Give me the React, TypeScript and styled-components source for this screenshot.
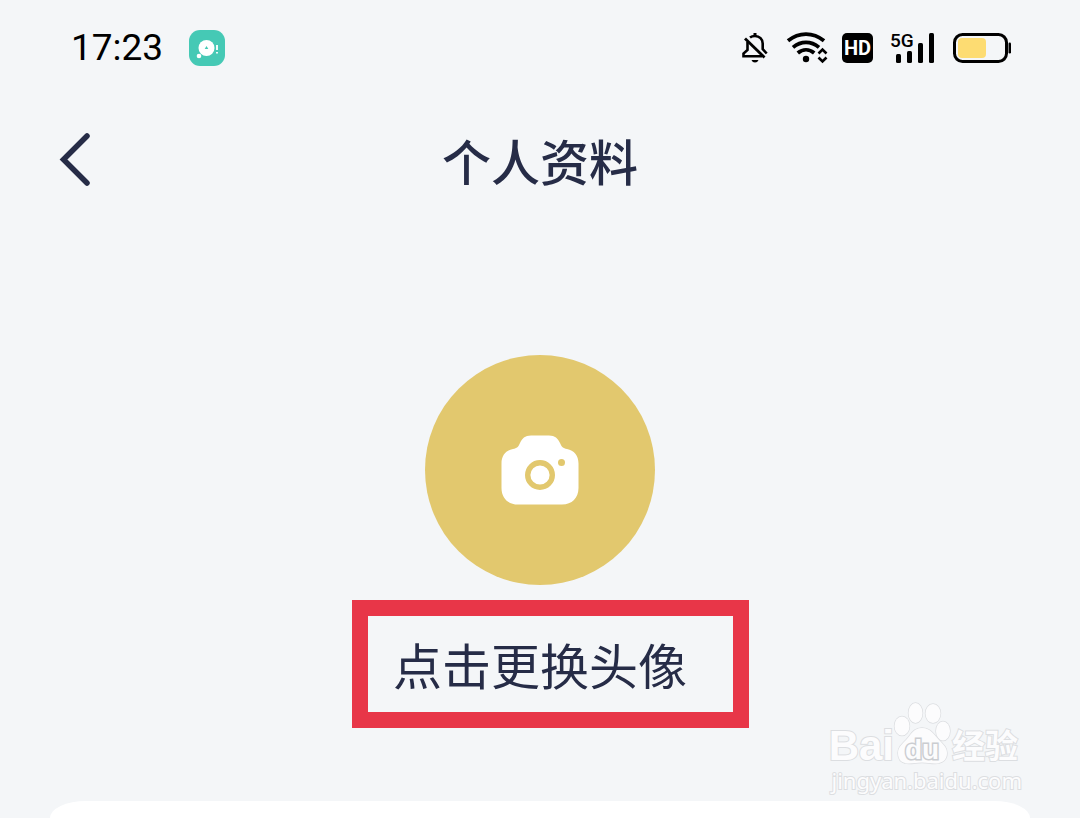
import React from 'react';
import styled, { createGlobalStyle } from 'styled-components';

const ink = '#262c47';
const surface = '#f4f6f8';
const gold = '#e2c86e';
const sans = '"Noto Sans", "Noto Sans CJK SC", sans-serif';

const GlobalStyle = createGlobalStyle`
  * { box-sizing: border-box; }
  body { margin: 0; background: ${surface}; font-family: ${sans}; }
  button { font: inherit; color: inherit; background: none; border: 0; padding: 0; cursor: pointer; }
  svg { display: block; flex: none; overflow: visible; }
`;

const Page = styled.div`
  position: relative;
  display: flex;
  flex-direction: column;
  min-height: 100vh;
  color: ${ink};
`;

const StatusBar = styled.div`
  display: flex;
  align-items: center;
  justify-content: space-between;
  height: 96px;
  padding: 0 68px 0 71px;
  color: #000;
`;

const StatusGroup = styled.div<{ $gap: number }>`
  display: flex;
  align-items: center;
  gap: ${(p) => p.$gap}px;
`;

const Clock = styled.time`
  font-family: Roboto, sans-serif;
  font-size: 37px;
  line-height: 44px;
`;

const Header = styled.header`
  display: grid;
  grid-template-columns: 1fr auto 1fr;
  align-items: center;
  height: 128px;
  padding: 0 56px;
`;

const BackButton = styled.button`
  justify-self: start;
`;

const Title = styled.h1`
  margin: 0;
  font-family: "Noto Sans CJK SC", sans-serif;
  font-size: 49px;
  line-height: 72px;
  font-weight: 500;
`;

const Profile = styled.main`
  display: flex;
  flex-direction: column;
  align-items: center;
  padding: 131px 0 89px;
`;

const Avatar = styled.button`
  display: grid;
  place-items: center;
  width: 230px;
  height: 230px;
  border-radius: 50%;
  background: ${gold};
`;

const ChangeAvatar = styled.button`
  position: relative;
  margin-top: 31px;
  font-family: "Noto Sans CJK SC", sans-serif;
  font-size: 49px;
  line-height: 96px;
  font-weight: 400;
  white-space: nowrap;

  &::after {
    content: '';
    position: absolute;
    inset: -16px -62px -16px -41px;
    border: 16px solid #e83648;
  }
`;

const Card = styled.section`
  flex: 1;
  margin: 0 50px;
  border-radius: 36px 36px 0 0 / 17px 17px 0 0;
  background: #fff;
`;

const Watermark = styled.div`
  position: absolute;
  top: 700px;
  right: 58px;
  display: flex;
  flex-direction: column;
  align-items: flex-end;
  color: #fcfcfd;
  -webkit-text-stroke: 2px #dcdee1;
  paint-order: stroke fill;
  pointer-events: none;
`;

const Brand = styled.div`
  display: flex;
  align-items: flex-end;
  height: 68px;
  padding-right: 4px;
`;

const Latin = styled.span`
  font-family: "Liberation Sans", Arial, sans-serif;
  font-size: 42px;
  line-height: 44px;
  font-weight: 700;
`;

const Han = styled.span`
  font-family: "Noto Sans CJK SC", sans-serif;
  font-size: 33px;
  line-height: 48px;
  font-weight: 700;
`;

const Site = styled.span`
  font-family: "Noto Sans", sans-serif;
  font-size: 22px;
  line-height: 24px;
`;

const AppBadge = () => (
  <svg width="36" height="36" viewBox="0 0 36 36" aria-hidden="true">
    <rect width="36" height="36" rx="11" fill="#45c9b5" />
    <circle cx="17.5" cy="18" r="8" fill="#fff" />
    <circle cx="10" cy="26" r="2.3" fill="#fff" />
    <path d="M17.5 16l1.800 3h-3.600z" fill="#45c9b5" />
    <path d="M28 15v5M28 22v1.500" stroke="#fff" strokeWidth="1.800" />
  </svg>
);

const MutedBell = () => (
  <svg width="26" height="32" viewBox="0 0 26 32" fill="none" stroke="#000" strokeWidth="2.600" aria-label="静音" role="img">
    <path d="M13 1v3" strokeWidth="3" />
    <path d="M8 5.500C9.500 4.300 11.200 4 13 4c4.500 0 7.700 3.200 7.700 7.500v5.500l4 4.500" />
    <path d="M5.500 10v8L1.500 21.500v2.700H20" />
    <path d="M3 6.500L22.500 25.500" strokeWidth="2.800" />
    <path d="M9.500 28h7c-.7 1.700-1.900 2.500-3.500 2.500S10.200 29.700 9.500 28z" fill="#000" stroke="none" />
  </svg>
);

const Wifi = () => (
  <svg width="40" height="32" viewBox="0 0 40 32" fill="none" stroke="#000" strokeWidth="3.800" aria-label="Wi-Fi" role="img">
    <path d="M1 8.800C12-.2 26-.2 37 8.800" />
    <path d="M6 15.400c8-6.600 18-6.600 26 0" />
    <path d="M10.800 21c5-4.200 11.400-4.200 16.400 0" />
    <circle cx="19" cy="27" r="3.200" fill="#000" stroke="none" />
    <path d="M31.500 21.500l4-4 4 4M31.500 25.500l4 4 4-4" strokeWidth="2.600" />
  </svg>
);

const Hd = () => (
  <svg width="31" height="30" viewBox="0 0 31 30" aria-label="HD" role="img">
    <rect width="31" height="30" rx="5" />
    <text x="15.500" y="22" textAnchor="middle" fill="#fff" fontFamily="Roboto, sans-serif" fontWeight="700" fontSize="20">HD</text>
  </svg>
);

const Signal = () => (
  <svg width="46" height="34" viewBox="0 -1 46 34" aria-label="5G" role="img">
    <text x="0" y="15" fontFamily="Roboto, sans-serif" fontWeight="500" fontSize="19">5G</text>
    <rect x="6" y="22" width="5" height="9" rx="1.500" />
    <rect x="17" y="19" width="5" height="12" rx="1.500" />
    <rect x="28" y="11" width="5" height="20" rx="1.500" />
    <rect x="39" y="1" width="5" height="30" rx="1.500" />
  </svg>
);

const Battery = () => (
  <svg width="59" height="30" viewBox="0 0 59 30" aria-label="电量" role="img">
    <rect x="1.500" y="1.500" width="52" height="27" rx="8" fill="none" stroke="#000" strokeWidth="3" />
    <rect x="5" y="5" width="28" height="20" rx="4" fill="#fddc72" />
    <rect x="55.500" y="9.500" width="2.500" height="11" rx="1.200" />
  </svg>
);

const BackArrow = () => (
  <svg width="40" height="60" viewBox="0 0 40 60" fill="none" stroke={ink} strokeWidth="5.500" aria-hidden="true">
    <path d="M31 6L7.500 29.500 31 53" strokeLinecap="round" />
  </svg>
);

const Camera = () => (
  <svg width="78" height="70" viewBox="0 0 78 70" aria-hidden="true">
    <path
      d="M30 .5h18c6 0 9 3 11 7.500 1.600 4 3 5.200 7 6 7 1.300 11.500 6.500 11.500 14.500V53c0 10-6.500 16.500-16.500 16.500H17C7 69.500.5 63 .5 53V28.500C.5 20.500 5 15.300 12 14c4-.8 5.400-2 7-6C21 3.500 24 .5 30 .5z"
      fill="#fff"
    />
    <circle cx="39" cy="40" r="12.300" fill="none" stroke={gold} strokeWidth="5.400" />
    <circle cx="60.500" cy="27.500" r="3.500" fill={gold} />
  </svg>
);

const PawShape = styled.svg`
  margin-bottom: 2px;

  text {
    font-family: "Liberation Sans", Arial, sans-serif;
    font-size: 28px;
    font-weight: 700;
    stroke: #cbcdd1;
    stroke-width: 3px;
  }
`;

const Paw = () => (
  <PawShape width="58" height="66" viewBox="0 0 58 66" fill="#fcfcfd" stroke="#dcdee1" strokeWidth="1.400" aria-hidden="true">
    <ellipse cx="8" cy="26" rx="7.500" ry="9.500" />
    <ellipse cx="21.500" cy="13" rx="7" ry="10" />
    <ellipse cx="39" cy="13.500" rx="7.500" ry="9.500" />
    <ellipse cx="49" cy="31" rx="7" ry="9.500" />
    <path d="M28 28c9 0 12 7 17 12s8 8 8 13c0 7-5 10.500-12 10.500-5 0-8-1-13-1s-8 1-13 1C8 63.500 4 60 4 53c0-5 3-8 8-13s7-12 16-12z" />
    <text x="28" y="59" textAnchor="middle">du</text>
  </PawShape>
);

export default function App() {
  return (
    <Page>
      <GlobalStyle />
      <StatusBar>
        <StatusGroup $gap={26}>
          <Clock>17:23</Clock>
          <AppBadge />
        </StatusGroup>
        <StatusGroup $gap={15}>
          <StatusGroup $gap={19}>
            <MutedBell />
            <Wifi />
          </StatusGroup>
          <StatusGroup $gap={17}>
            <Hd />
            <Signal />
            <Battery />
          </StatusGroup>
        </StatusGroup>
      </StatusBar>
      <Header>
        <BackButton type="button" aria-label="返回">
          <BackArrow />
        </BackButton>
        <Title>个人资料</Title>
      </Header>
      <Profile>
        <Avatar type="button" aria-label="头像">
          <Camera />
        </Avatar>
        <ChangeAvatar type="button">点击更换头像</ChangeAvatar>
      </Profile>
      <Card />
      <Watermark>
        <Brand>
          <Latin>Bai</Latin>
          <Paw />
          <Han>经验</Han>
        </Brand>
        <Site>jingyan.baidu.com</Site>
      </Watermark>
    </Page>
  );
}
